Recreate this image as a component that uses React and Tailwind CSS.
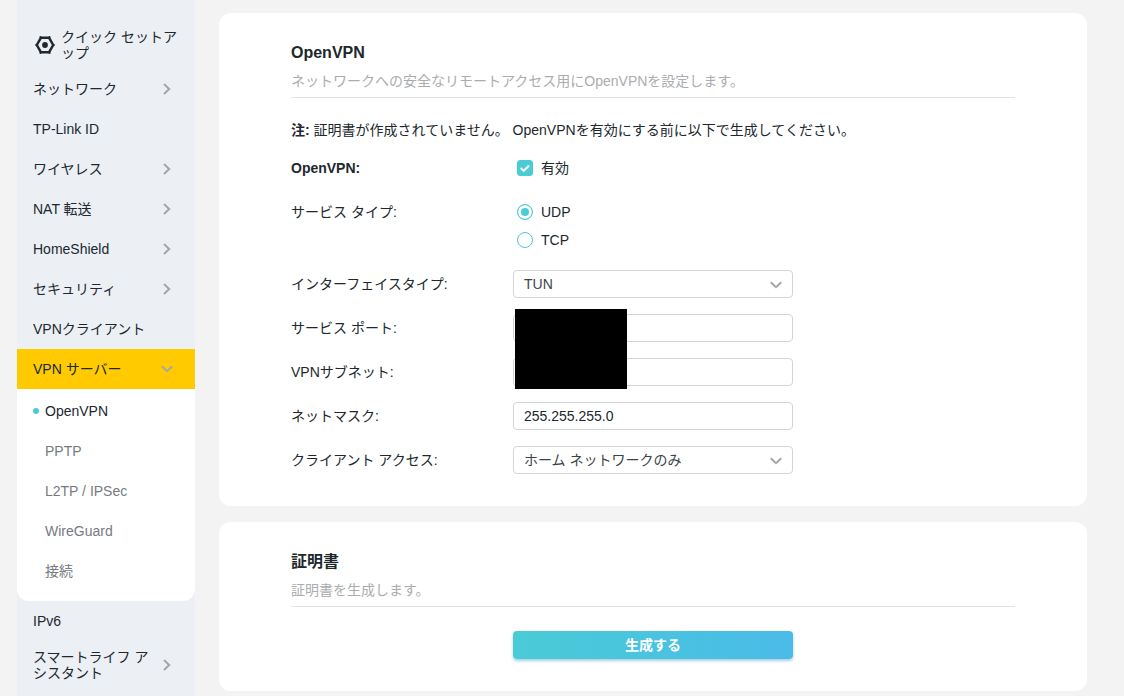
import { useState } from "react";

const topItems = [
  { label: "ネットワーク", expandable: true },
  { label: "TP-Link ID" },
  { label: "ワイヤレス", expandable: true },
  { label: "NAT 転送", expandable: true },
  { label: "HomeShield", expandable: true },
  { label: "セキュリティ", expandable: true },
  { label: "VPNクライアント" },
];

const vpnItems = ["OpenVPN", "PPTP", "L2TP / IPSec", "WireGuard", "接続"];

function ChevronRight() {
  return (
    <svg className="w-2 h-3 shrink-0" viewBox="0 0 8 12" fill="none" stroke="#a3a7ab" strokeWidth="2" aria-hidden="true">
      <path d="M1 1l5.2 5L1 11" />
    </svg>
  );
}

function ChevronDown({ className }) {
  return (
    <svg className={className} viewBox="0 0 12 8" fill="none" stroke="#a3a7ab" strokeWidth="1.9" aria-hidden="true">
      <path d="M0.8 1.2L6 6.2l5.2-5" />
    </svg>
  );
}

function GearIcon() {
  return (
    <svg className="w-5 h-5 shrink-0" viewBox="0 0 20 20" fill="none" stroke="#20282e" aria-hidden="true">
      <path d="M6 2.7h8l4.2 7.3-4.2 7.3H6L1.8 10z" strokeWidth="2.5" strokeLinejoin="round" />
      <path
        d="M5.4 1.9v.01M14.6 1.9v.01M18.8 10v.01M14.6 18.1v.01M5.4 18.1v.01M1.2 10v.01"
        strokeWidth="2"
        strokeLinecap="round"
      />
      <circle cx="10" cy="10" r="2.9" fill="#20282e" stroke="none" />
    </svg>
  );
}

function NavItem({ label, expandable }) {
  if (expandable) {
    return (
      <button
        type="button"
        className="flex w-full min-h-10 items-center justify-between gap-2 py-2 pl-4 pr-6 text-left leading-4 break-all"
      >
        {label}
        <ChevronRight />
      </button>
    );
  }

  return (
    <a href="#" className="flex min-h-10 items-center px-4 py-2 leading-4">
      {label}
    </a>
  );
}

function Sidebar() {
  return (
    <nav className="w-[178px] shrink-0 bg-[#ecf0f5] pt-[21px] pb-2">
      <a href="#" className="flex items-center gap-1.5 py-2 pl-[18px] pr-4 leading-4 break-all">
        <GearIcon />
        <span>クイック セットアップ</span>
      </a>
      {topItems.map((item) => (
        <NavItem key={item.label} {...item} />
      ))}
      <div className="rounded-b-xl bg-white">
        <button
          type="button"
          className="flex w-full h-10 items-center justify-between bg-[#ffcb00] pl-4 pr-[22px] text-left"
        >
          VPN サーバー
          <ChevronDown className="w-3 h-2" />
        </button>
        <ul className="pt-0.5 pb-2.5">
          {vpnItems.map((label, i) => (
            <li key={label}>
              {i === 0 ? (
                <a href="#" className="flex h-10 items-center gap-1.5 pl-4">
                  <span className="w-1.5 h-1.5 rounded-full bg-[#4acbd6]" />
                  {label}
                </a>
              ) : (
                <a href="#" className="flex h-10 items-center pl-7 text-[#767b7f]">
                  {label}
                </a>
              )}
            </li>
          ))}
        </ul>
      </div>
      <NavItem label="IPv6" />
      <NavItem label="スマートライフ アシスタント" expandable />
    </nav>
  );
}

function Card({ title, description, children }) {
  return (
    <section className="rounded-xl bg-white px-[72px] pt-7 pb-8">
      <h2 className="text-base leading-6 font-bold">{title}</h2>
      <p className="mt-1.5 border-b border-[#e2e3e4] pb-1.5 text-[#a9adb0]">{description}</p>
      {children}
    </section>
  );
}

function Row({ label, htmlFor, bold, children }) {
  return (
    <div className="flex items-start">
      <label htmlFor={htmlFor} className={`w-[222px] shrink-0 leading-7 ${bold ? "font-bold" : ""}`}>
        {label}
      </label>
      {children}
    </div>
  );
}

function TextInput({ id, defaultValue }) {
  return (
    <input
      id={id}
      type="text"
      defaultValue={defaultValue}
      className="w-[280px] h-7 rounded border border-[#d3d5d6] bg-white px-2.5"
    />
  );
}

function Select({ id, options }) {
  return (
    <div className="relative w-[280px]">
      <select
        id={id}
        className="block w-full h-7 appearance-none rounded border border-[#d3d5d6] bg-white pl-2.5 pr-8 text-[#3c4348]"
      >
        {options.map((option) => (
          <option key={option}>{option}</option>
        ))}
      </select>
      <ChevronDown className="pointer-events-none absolute right-[11px] top-[11px] w-3 h-2" />
    </div>
  );
}

function Radio({ label, checked, onChange }) {
  return (
    <label className="flex h-7 items-center gap-2 pl-1">
      <input
        type="radio"
        name="serviceType"
        checked={checked}
        onChange={onChange}
        className="w-4 h-4 appearance-none rounded-full border border-[#4acbd6] bg-white checked:bg-[#4acbd6] checked:inset-ring-3 checked:inset-ring-white"
      />
      {label}
    </label>
  );
}

export default function App() {
  const [enabled, setEnabled] = useState(true);
  const [serviceType, setServiceType] = useState("UDP");

  return (
    <div
      lang="ja"
      className="flex min-h-screen gap-6 bg-[#f3f3f3] pl-[17px] pr-[37px] font-['Liberation_Sans','Noto_Sans_CJK_JP',sans-serif] text-sm text-[#20282e]"
    >
      <Sidebar />
      <main className="flex min-w-0 flex-1 flex-col gap-4 pt-[13px]">
        <Card title="OpenVPN" description="ネットワークへの安全なリモートアクセス用にOpenVPNを設定します。">
          <p className="mt-[22px]">
            <strong>注:</strong> 証明書が作成されていません。 OpenVPNを有効にする前に以下で生成してください。
          </p>
          <form className="mt-3.5 flex flex-col gap-4">
            <Row label="OpenVPN:" htmlFor="enabled" bold>
              <label className="flex h-7 items-center gap-2 pl-1">
                <span className="relative flex">
                  <input
                    id="enabled"
                    type="checkbox"
                    checked={enabled}
                    onChange={(e) => setEnabled(e.target.checked)}
                    className="w-4 h-4 appearance-none rounded-[3px] border border-[#4acbd6] bg-white checked:bg-[#4acbd6]"
                  />
                  {enabled && (
                    <svg
                      className="pointer-events-none absolute inset-0 w-4 h-4"
                      viewBox="0 0 16 16"
                      fill="none"
                      stroke="#fff"
                      strokeWidth="2"
                      aria-hidden="true"
                    >
                      <path d="M3.8 8l2.9 2.9 5.4-5.4" />
                    </svg>
                  )}
                </span>
                有効
              </label>
            </Row>
            <div className="flex items-start" role="radiogroup" aria-labelledby="serviceTypeLabel">
              <span id="serviceTypeLabel" className="w-[222px] shrink-0 leading-7">
                サービス タイプ:
              </span>
              <div>
                <Radio label="UDP" checked={serviceType === "UDP"} onChange={() => setServiceType("UDP")} />
                <Radio label="TCP" checked={serviceType === "TCP"} onChange={() => setServiceType("TCP")} />
              </div>
            </div>
            <Row label="インターフェイスタイプ:" htmlFor="interfaceType">
              <Select id="interfaceType" options={["TUN", "TAP"]} />
            </Row>
            <div className="relative flex flex-col gap-4">
              <Row label="サービス ポート:" htmlFor="port">
                <TextInput id="port" />
              </Row>
              <Row label="VPNサブネット:" htmlFor="subnet">
                <TextInput id="subnet" />
              </Row>
              {/* hides the port and subnet values */}
              <div className="absolute left-56 -top-[5px] h-20 w-28 bg-black" />
            </div>
            <Row label="ネットマスク:" htmlFor="netmask">
              <TextInput id="netmask" defaultValue="255.255.255.0" />
            </Row>
            <Row label="クライアント アクセス:" htmlFor="clientAccess">
              <Select id="clientAccess" options={["ホーム ネットワークのみ", "インターネットとホーム ネットワーク"]} />
            </Row>
          </form>
        </Card>

        <Card title="証明書" description="証明書を生成します。">
          <button
            type="button"
            className="mt-6 ml-[222px] block h-7 w-[280px] rounded bg-linear-to-r from-[#4acbd6] to-[#4abbe8] font-bold text-white shadow-[0_2px_3px_rgba(60,150,180,0.45)]"
          >
            生成する
          </button>
        </Card>
      </main>
    </div>
  );
}
